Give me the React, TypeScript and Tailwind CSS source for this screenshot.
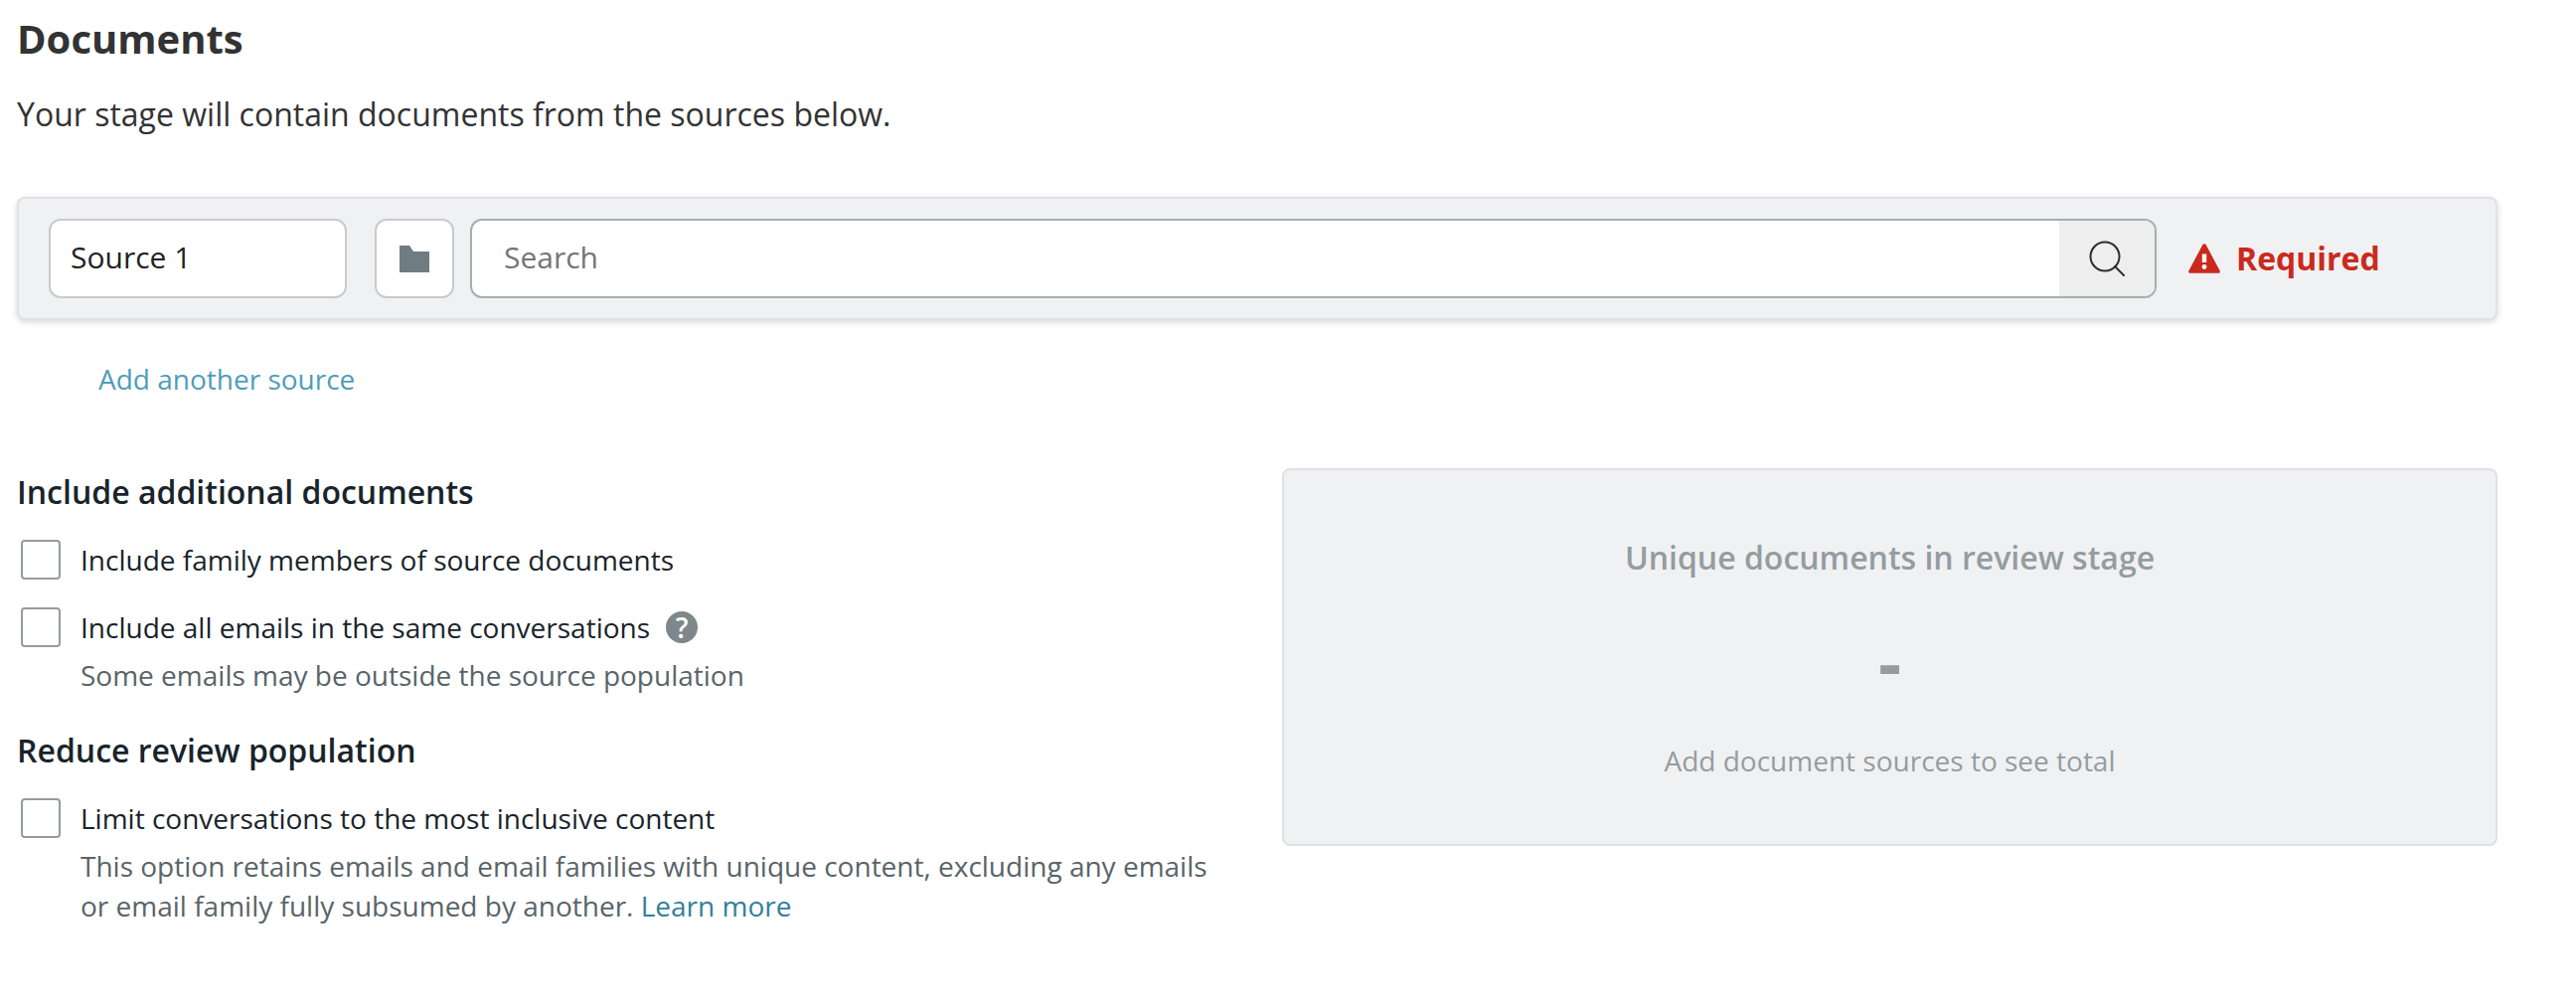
import { useState } from "react";

interface OptionProps {
  id: string;
  label: string;
  help?: boolean;
  children?: React.ReactNode;
}

const FolderIcon = () => (
  <svg width="30" height="27" viewBox="0 0 30 27" fill="#6f7c82" aria-hidden="true">
    <path d="M0 0h10l4 6h16v21H0z" />
  </svg>
);

const SearchIcon = () => (
  <svg width="36" height="36" viewBox="0 0 36 36" fill="none" stroke="#2e2e2e" strokeWidth="2" aria-hidden="true">
    <circle cx="16" cy="16" r="14.5" />
    <path d="M26 26l9 9" strokeLinecap="round" />
  </svg>
);

const WarningIcon = () => (
  <svg width="32" height="30" viewBox="0 0 32 30" aria-hidden="true">
    <path
      d="M14.4 1.1c.7-1.3 2.5-1.3 3.2 0l14 26.2c.6 1.2-.1 2.5-1.4 2.5H1.8C.5 29.8-.2 28.5.4 27.3z"
      fill="#ca2a1d"
    />
    <rect x="13.8" y="10.5" width="4.4" height="8.5" fill="#fff" />
    <circle cx="16" cy="23.5" r="2.4" fill="#fff" />
  </svg>
);

const Option = ({ id, label, help, children }: OptionProps) => {
  const [checked, setChecked] = useState(false);

  return (
    <div className="mt-7">
      <div className="flex items-center pl-1">
        <input
          id={id}
          type="checkbox"
          checked={checked}
          onChange={(e) => setChecked(e.target.checked)}
          className="size-10 shrink-0 appearance-none rounded border-2 border-[#959c9f] bg-white checked:bg-[#3a86a0]"
        />
        <label htmlFor={id} className="ml-5 text-[28px] leading-10 text-[#18242b]">
          {label}
        </label>
        {help && (
          <button
            type="button"
            aria-label="Help"
            className="ml-4 flex size-8 shrink-0 items-center justify-center rounded-full bg-[#7e878a] text-[28px] leading-8 font-semibold text-white"
          >
            ?
          </button>
        )}
      </div>
      {children && (
        <p className="mt-2 pl-16 text-[28px] leading-10 text-[#596469]">
          {children}
        </p>
      )}
    </div>
  );
};

const SourceRow = () => {
  const [name, setName] = useState("Source 1");

  return (
    <div className="mt-[63px] flex items-center rounded-lg border-2 border-[#dfe2e5] bg-[#f0f1f3] px-[30px] py-5 shadow-[0_2px_6px_rgba(0,0,0,0.16)]">
      <input
        type="text"
        aria-label="Source name"
        value={name}
        onChange={(e) => setName(e.target.value)}
        className="h-20 w-[300px] rounded-xl border-2 border-[#c9cacb] bg-white px-5 pb-[3px] text-[30px] text-[#222]"
      />
      <button
        type="button"
        aria-label="Browse folders"
        className="ml-7 flex size-20 shrink-0 items-center justify-center rounded-xl border-2 border-[#c9cacb] bg-white"
      >
        <FolderIcon />
      </button>
      <div className="ml-4 flex h-20 min-w-0 flex-1 overflow-hidden rounded-xl border-2 border-[#a3afb0] bg-white">
        <input
          type="text"
          aria-label="Search"
          placeholder="Search"
          className="min-w-0 flex-1 px-8 pb-[3px] text-[30px] placeholder:text-[#757575]"
        />
        <button
          type="button"
          aria-label="Run search"
          className="flex w-24 items-center justify-center bg-[#eee]"
        >
          <SearchIcon />
        </button>
      </div>
      <div className="ml-8 flex w-[279px] shrink-0 items-center gap-4 text-[32px] leading-10 font-bold text-[#ca2a1d]">
        <WarningIcon />
        Required
      </div>
    </div>
  );
};

export default function App() {
  return (
    <main className="min-h-screen bg-white pt-[15px] pr-[79px] pb-16 pl-[17px] font-['Open_Sans',sans-serif]">
      <h1 className="text-[40px] leading-12 font-bold text-[#333]">Documents</h1>
      <p className="mt-8 text-[32px] leading-10 text-[#333]">
        Your stage will contain documents from the sources below.
      </p>

      <SourceRow />

      <a href="#" className="mt-[39px] ml-[82px] block w-fit text-[28px] leading-10 text-[#509dbb]">
        Add another source
      </a>

      <div className="mt-[70px] grid grid-cols-2 items-start gap-[50px]">
        <section className="pt-1">
          <h2 className="text-[32px] leading-10 font-semibold text-[#18242b]">
            Include additional documents
          </h2>
          <Option id="family" label="Include family members of source documents" />
          <Option id="conversations" label="Include all emails in the same conversations" help>
            Some emails may be outside the source population
          </Option>

          <h2 className="mt-9 text-[32px] leading-10 font-semibold text-[#18242b]">
            Reduce review population
          </h2>
          <Option id="inclusive" label="Limit conversations to the most inclusive content">
            This option retains emails and email families with unique content, excluding any emails or
            email family fully subsumed by another.{" "}
            <a href="#" className="text-[#327f99]">
              Learn more
            </a>
          </Option>
        </section>

        <section className="rounded-lg border-2 border-[#dfe2e5] bg-[#f0f1f3] pt-[68px] pb-16 text-center text-[#959c9f]">
          <h2 className="text-[32px] leading-10 font-semibold">Unique documents in review stage</h2>
          <p className="mt-12 text-[72px] leading-[72px] font-bold">-</p>
          <p className="mt-11 text-[28px] leading-10">Add document sources to see total</p>
        </section>
      </div>
    </main>
  );
}
